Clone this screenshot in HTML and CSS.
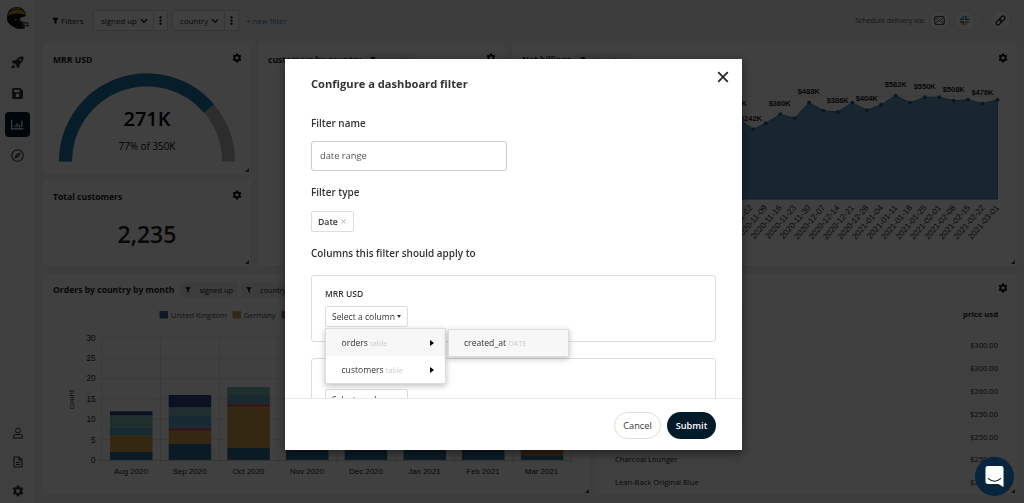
FILE: index.html
```html
<!DOCTYPE html>
<html lang="en">

<head>
    <meta charset="UTF-8">
    <meta name="viewport" content="width=device-width, initial-scale=1.0">
    <title>Dashboard</title>
    <link rel="stylesheet" href="styles.css">
</head>

<body>

    <svg class="sprite">
        <symbol id="gear" viewBox="0 0 24 24">
            <path fill-rule="evenodd" d="M9.6 1h4.8l.6 3.1 2 1.200 3-1.100 2.400 4.100-2.400 2.100v2.800l2.400 2.100-2.400 4.100-3-1.100-2 1.200-.6 3.500H9.600l-.6-3.500-2-1.200-3 1.100-2.400-4.100L4 13.200v-2.800L1.600 8.300 4 4.200l3 1.100 2-1.200zM12 7.800a4 4 0 1 0 0 8 4 4 0 0 0 0-8z"/>
        </symbol>
        <symbol id="funnel" viewBox="0 0 12 12">
            <path d="M.5.5h11L7.500 5.500v6L4.500 9.500v-4z"/>
        </symbol>
        <symbol id="chevron" viewBox="0 0 12 8">
            <path d="M1.500 1.500 6 6l4.500-4.500" fill="none" stroke="#222" stroke-width="2.200"/>
        </symbol>
        <symbol id="dots" viewBox="0 0 4 12">
            <circle cx="2" cy="1.700" r="1.500"/><circle cx="2" cy="6" r="1.500"/><circle cx="2" cy="10.300" r="1.500"/>
        </symbol>
    </svg>

    <div class="app">
        <nav class="sidebar">
            <svg class="logo" viewBox="0 0 24 24">
                <path d="M1 12C1 4 6 1 11 1s8 3 9 9l-6 2 1 4 3 2 1 4c-3 1.500-8 1.500-11-1-4-2-7-4-7-9z" fill="#111"/>
                <path d="M2 10C3 4 7 1.500 11 1.500s7.500 3 8 7.500c-6-2-11-2-17 1z" fill="#b8922e"/>
                <path d="M4 5.500c4-3 10-3 14 0" fill="none" stroke="#222" stroke-width="1"/>
                <path d="M13 14c2 2 4 3 9.500 3M18 17.500v4M21.500 17v4M16 19.500h7" fill="none" stroke="#555" stroke-width="1.200"/>
                <circle cx="9.500" cy="14" r="1.300" fill="#666"/>
            </svg>
            <a class="nav-item"><svg viewBox="0 0 24 24"><path fill-rule="evenodd" d="M23 1c-7-.5-11 2-14 7H4L1 13l5 .5 4.500 4.500.5 5 5-3v-5c5-3 7.500-7 7-14zm-6 4a2 2 0 1 1 0 4 2 2 0 0 1 0-4zM4 16c-2 1-3 4-3 7 3 0 6-1 7-3z"/></svg></a>
            <a class="nav-item"><svg viewBox="0 0 24 24"><path fill-rule="evenodd" d="M4 2h13l5 5v13a2 2 0 0 1-2 2H4a2 2 0 0 1-2-2V4a2 2 0 0 1 2-2zm1.500 3v4.500H16V5zM12 12a3.500 3.500 0 1 0 0 7 3.500 3.500 0 0 0 0-7z"/></svg></a>
            <a class="nav-item active"><svg viewBox="0 0 24 24"><path d="M1 3v17h22M7 17v-3M11.300 17V9M15.500 17v-5M20 17V5" fill="none" stroke="#fff" stroke-width="2.200"/></svg></a>
            <a class="nav-item"><svg viewBox="0 0 24 24"><circle cx="12" cy="12" r="10.500" fill="none" stroke="#333" stroke-width="2"/><path fill-rule="evenodd" d="M18 6l-3.500 8.500L6 18l3.500-8.500zm-6 4.500a1.500 1.500 0 1 0 0 3 1.500 1.500 0 0 0 0-3z"/></svg></a>
            <a class="nav-item bottom first"><svg viewBox="0 0 24 24"><circle cx="12" cy="7" r="5" fill="none" stroke="#333" stroke-width="2"/><path d="M3 22v-3c0-3 2-4 4-4h10c2 0 4 1 4 4v3z" fill="none" stroke="#333" stroke-width="2"/></svg></a>
            <a class="nav-item bottom"><svg viewBox="0 0 24 24"><path d="M4 2h10l6 6v14H4zM14 2v6h6M8 13h8M8 17h8" fill="none" stroke="#333" stroke-width="2.200"/></svg></a>
            <a class="nav-item bottom"><svg viewBox="0 0 24 24"><use href="#gear"/></svg></a>
        </nav>

        <main class="main">
            <header class="topbar">
                <svg class="funnel"><use href="#funnel"/></svg>
                <span class="filters-label">Filters</span>
                <div class="filter-btn signed">signed up <svg class="chevron"><use href="#chevron"/></svg></div>
                <div class="filter-more"><svg class="dots"><use href="#dots"/></svg></div>
                <div class="filter-btn country">country <svg class="chevron"><use href="#chevron"/></svg></div>
                <div class="filter-more"><svg class="dots"><use href="#dots"/></svg></div>
                <a class="new-filter">+ new filter</a>
                <span class="schedule">Schedule delivery via:</span>
                <div class="round"><svg viewBox="0 0 20 20"><rect x="1.500" y="3" width="17" height="14" rx="2" fill="none" stroke="#222" stroke-width="1.700"/><path d="M2 4l8 7 8-7M2 16l6-6M18 16l-6-6" fill="none" stroke="#222" stroke-width="1.400"/></svg></div>
                <div class="round"><svg viewBox="0 0 20 20" fill="none" stroke-width="3.400" stroke-linecap="round"><path d="M3 7.500h5M7.500 3v1" stroke="#36a5c0"/><path d="M12.500 3v5M17 7.500h-1" stroke="#2e967d"/><path d="M17 12.500h-5M12.500 17v-1" stroke="#c09a3e"/><path d="M7.500 17v-5M3 12.500h1" stroke="#b0506a"/></svg></div>
                <span class="divider"></span>
                <div class="round"><svg viewBox="0 0 20 20"><g fill="none" stroke="#222" stroke-width="2.400" transform="rotate(-45 10 10)"><rect x="0" y="6.500" width="11" height="7" rx="3.500"/><rect x="9" y="6.500" width="11" height="7" rx="3.500"/></g></svg></div>
            </header>

            <section class="row top">
                <div class="col">
                    <div class="card gauge">
                        <h3>MRR USD</h3><svg class="gear"><use href="#gear"/></svg>
                        <svg class="gauge-chart" viewBox="0 0 176 89">
                            <path d="M6.500 88.500a81.500 81.500 0 0 1 163 0" class="gauge-track"/>
                            <path d="M6.500 88.500a81.500 81.500 0 0 1 143.500-53" class="gauge-value"/>
                            <text x="88" y="53" class="gauge-number">271K</text>
                            <text x="88" y="76.500" class="gauge-sub">77% of 350K</text>
                        </svg>
                    </div>
                    <div class="card total">
                        <h3>Total customers</h3><svg class="gear"><use href="#gear"/></svg>
                        <p class="big">2,235</p>
                    </div>
                </div>
                <div class="card customers">
                    <h3>customers by country</h3><span class="tag"><svg><use href="#funnel"/></svg>country</span><svg class="gear"><use href="#gear"/></svg>
                </div>
                <div class="card net">
                    <h3>Net billings</h3><span class="tag"><svg><use href="#funnel"/></svg>signed up</span><svg class="gear"><use href="#gear"/></svg>
                    <svg class="area-chart" viewBox="700 70 317 190">
                        <path d="M700 96H997M700 199H997" class="grid"/>
                        <path d="M728 110L742.300 121.700 753.300 129.300 765.700 123.300 780.300 114.300 794.700 118.300 809 102.700 823.300 110.700 838 112 852.300 102.700 867 110.300 881 104.700 895.700 95.700 910 102.700 924.700 97.300 939.300 97.300 953.700 100.700 968 99.700 982.300 103.700 997.500 99.700V199H728z" class="area"/>
                        <g class="points">
                            <circle cx="753.300" cy="129.300" r="2"/><circle cx="765.700" cy="123.300" r="2"/><circle cx="780.300" cy="114.300" r="2"/><circle cx="794.700" cy="118.300" r="2"/><circle cx="809" cy="102.700" r="2"/><circle cx="823.300" cy="110.700" r="2"/><circle cx="838" cy="112" r="2"/><circle cx="852.300" cy="102.700" r="2"/><circle cx="867" cy="110.300" r="2"/><circle cx="881" cy="104.700" r="2"/><circle cx="895.700" cy="95.700" r="2"/><circle cx="910" cy="102.700" r="2"/><circle cx="924.700" cy="97.300" r="2"/><circle cx="939.300" cy="97.300" r="2"/><circle cx="953.700" cy="100.700" r="2"/><circle cx="968" cy="99.700" r="2"/><circle cx="982.300" cy="103.700" r="2"/><circle cx="997.500" cy="99.700" r="2"/>
                        </g>
                        <g class="values">
                            <text x="736" y="105.500">$350K</text><text x="751" y="120.500">$242K</text><text x="779.700" y="105.500">$360K</text><text x="808.700" y="93.500">$488K</text><text x="837.700" y="102.500">$386K</text><text x="866.700" y="101">$404K</text><text x="895.700" y="86.500">$582K</text><text x="924.700" y="89">$550K</text><text x="953.700" y="92">$508K</text><text x="982.500" y="94.500">$476K</text>
                        </g>
                        <g class="dates">
                            <text transform="translate(753 208) rotate(-49)">2020-11-02</text>
                            <text transform="translate(767.500 208) rotate(-49)">2020-11-09</text>
                            <text transform="translate(782 208) rotate(-49)">2020-11-16</text>
                            <text transform="translate(796.500 208) rotate(-49)">2020-11-23</text>
                            <text transform="translate(811 208) rotate(-49)">2020-11-30</text>
                            <text transform="translate(825.500 208) rotate(-49)">2020-12-07</text>
                            <text transform="translate(840 208) rotate(-49)">2020-12-14</text>
                            <text transform="translate(854.500 208) rotate(-49)">2020-12-21</text>
                            <text transform="translate(869 208) rotate(-49)">2020-12-28</text>
                            <text transform="translate(883.500 208) rotate(-49)">2021-01-04</text>
                            <text transform="translate(898 208) rotate(-49)">2021-01-11</text>
                            <text transform="translate(912.500 208) rotate(-49)">2021-01-18</text>
                            <text transform="translate(927 208) rotate(-49)">2021-01-25</text>
                            <text transform="translate(941.500 208) rotate(-49)">2021-02-01</text>
                            <text transform="translate(956 208) rotate(-49)">2021-02-08</text>
                            <text transform="translate(970.500 208) rotate(-49)">2021-02-15</text>
                            <text transform="translate(985 208) rotate(-49)">2021-02-22</text>
                            <text transform="translate(999.500 208) rotate(-49)">2021-03-01</text>
                        </g>
                    </svg>
                </div>
            </section>

            <section class="row lower">
                <div class="card orders">
                    <h3>Orders by country by month</h3>
                    <span class="tag"><svg><use href="#funnel"/></svg>signed up</span>
                    <span class="tag"><svg><use href="#funnel"/></svg>country</span>
                    <svg class="bar-chart" viewBox="43 300 548 190">
                        <g class="legend">
                            <rect x="159.500" y="311" width="8.500" height="7.500" fill="#2a6496"/><text x="171" y="317.500">United Kingdom</text>
                            <rect x="232.500" y="311" width="8.500" height="7.500" fill="#d0a257"/><text x="243.700" y="317.500">Germany</text>
                            <rect x="281.500" y="311" width="8.500" height="7.500" fill="#c05a5a"/>
                        </g>
                        <path d="M98 337.700H572M98 358.100H572M98 378.500H572M98 398.900H572M98 419.200H572M98 439.600H572M101.700 337.700V464M160.400 337.700V464M219.100 337.700V464M277.800 337.700V464M336.500 337.700V464M395.200 337.700V464M453.900 337.700V464M512.600 337.700V464M571.300 337.700V464" class="grid"/>
                        <g class="blue"><rect x="110" y="452" width="42.500" height="8.300"/><rect x="168.700" y="444" width="42.500" height="16.300"/><rect x="227.300" y="448" width="42.500" height="12.300"/><rect x="286" y="440" width="42.500" height="20.300"/><rect x="344.700" y="440" width="42.500" height="20.300"/><rect x="403.500" y="440" width="42.500" height="20.300"/><rect x="462" y="440" width="42.500" height="20.300"/><rect x="520.800" y="456" width="42.500" height="4.300"/></g>
                        <g class="gold"><rect x="110" y="435.500" width="42.500" height="16.500"/><rect x="168.700" y="431.500" width="42.500" height="12.500"/><rect x="227.300" y="407.300" width="42.500" height="40.700"/></g>
                        <rect x="520.800" y="440" width="42.500" height="16" class="orange"/>
                        <g class="red"><rect x="168.700" y="427.500" width="42.500" height="4"/><rect x="227.300" y="403.300" width="42.500" height="4"/></g>
                        <g class="sky"><rect x="110" y="427.500" width="42.500" height="8"/><rect x="168.700" y="415.300" width="42.500" height="12.200"/><rect x="227.300" y="395" width="42.500" height="8.300"/></g>
                        <g class="mint"><rect x="110" y="415.300" width="42.500" height="12.200"/><rect x="168.700" y="407.300" width="42.500" height="8"/><rect x="227.300" y="387" width="42.500" height="8"/></g>
                        <g class="navy"><rect x="110" y="411.300" width="42.500" height="4"/><rect x="168.700" y="395" width="42.500" height="12.300"/></g>
                        <path d="M98 460.300H572" class="axis"/>
                        <g class="y-labels"><text x="95.500" y="340.500">30</text><text x="95.500" y="361">25</text><text x="95.500" y="381.400">20</text><text x="95.500" y="401.800">15</text><text x="95.500" y="422">10</text><text x="95.500" y="442.500">5</text><text x="95.500" y="463">0</text></g>
                        <text transform="translate(73.500 399.500) rotate(-90)" class="axis-title">count</text>
                        <g class="x-labels"><text x="131" y="474">Aug 2020</text><text x="189.700" y="474">Sep 2020</text><text x="248.500" y="474">Oct 2020</text><text x="307" y="474">Nov 2020</text><text x="366" y="474">Dec 2020</text><text x="424.500" y="474">Jan 2021</text><text x="483" y="474">Feb 2021</text><text x="541.500" y="474">Mar 2021</text></g>
                    </svg>
                </div>
                <div class="card products">
                    <div class="card-head"><h3>Products</h3><svg class="gear"><use href="#gear"/></svg></div>
                    <div class="tr th"><span>name</span><span>price usd</span></div>
                    <div class="tr"><span></span><span>$300.00</span></div>
                    <div class="tr"><span></span><span>$300.00</span></div>
                    <div class="tr"><span></span><span>$260.00</span></div>
                    <div class="tr"><span></span><span>$250.00</span></div>
                    <div class="tr"><span></span><span>$250.00</span></div>
                    <div class="tr"><span>Charcoal Lounger</span><span>$250.00</span></div>
                    <div class="tr"><span>Lean-Back Original Blue</span><span>$250.00</span></div>
                </div>
            </section>
        </main>
    </div>

    <div class="overlay">
        <div class="modal">
            <svg class="close" viewBox="0 0 12 12"><path d="M1.200 1.200l9.600 9.600M10.800 1.200l-9.600 9.600"/></svg>
            <div class="modal-body">
                <h2>Configure a dashboard filter</h2>
                <label for="filter-name">Filter name</label>
                <input type="text" id="filter-name" class="name-input" value="date range">
                <label>Filter type</label>
                <div class="type-tag">Date <svg viewBox="0 0 6 6"><path d="M.7.7l4.600 4.600M5.300.7L.7 5.300"/></svg></div>
                <label>Columns this filter should apply to</label>
                <div class="column-box">
                    <h4>MRR USD</h4>
                    <div class="select">Select a column<i class="caret"></i></div>
                </div>
                <div class="column-box">
                    <h4></h4>
                    <div class="select">Select a column<i class="caret"></i></div>
                </div>
            </div>
            <div class="modal-footer">
                <button class="cancel-button">Cancel</button>
                <button class="submit-button">Submit</button>
            </div>
            <div class="menu">
                <div class="menu-item hovered">orders <small>table</small><i class="arrow"></i></div>
                <div class="menu-item">customers <small>table</small><i class="arrow"></i></div>
            </div>
            <div class="submenu">created_at <small>DATE</small></div>
        </div>
    </div>

    <div class="chat">
        <svg viewBox="0 0 20 22"><path d="M3 0h14a2.500 2.500 0 0 1 2.500 2.500V22L14 19H3A2.500 2.500 0 0 1 .5 16.500v-14A2.500 2.500 0 0 1 3 0z" fill="#fff"/><path d="M3.500 13.300c4 3.300 9 3.300 13 0" fill="none" stroke="#07253d" stroke-width="1.200" stroke-linecap="round"/></svg>
    </div>

</body>

</html>
```

FILE: styles.css
```css
* {
    box-sizing: border-box;
}

body {
    margin: 0;
    height: 503px;
    overflow: hidden;
    background: #f4f4f4;
    font-family: "Open Sans", sans-serif;
    font-size: 8px;
    color: #222;
}

h2, h3, h4, p {
    margin: 0;
}

.sprite {
    display: none;
}

.app {
    display: flex;
    height: 503px;
}

/* sidebar */
.sidebar {
    width: 36px;
    flex: none;
    display: flex;
    flex-direction: column;
    align-items: center;
    background: #fafafa;
    border-right: 1px solid #e6e6e6;
    padding-top: 6px;
}

.logo {
    width: 24px;
    height: 24px;
    margin-bottom: 20px;
}

.nav-item {
    width: 25px;
    height: 25px;
    margin-bottom: 6px;
    border-radius: 4px;
    display: flex;
    align-items: center;
    justify-content: center;
    fill: #333;
}

.nav-item svg {
    width: 13px;
    height: 13px;
}

.nav-item.active {
    background: #021f33;
}

.nav-item.bottom {
    margin-bottom: 4px;
}

.nav-item.bottom svg {
    width: 12px;
    height: 12px;
}

.nav-item.first {
    margin-top: auto;
}

.nav-item:last-child {
    margin-bottom: 0 !important;
}

.main {
    flex: 1;
    padding-left: 7px;
}

/* top bar */
.topbar {
    height: 43px;
    display: flex;
    align-items: center;
    padding: 0 13px 2px 9px;
}

.funnel {
    width: 7px;
    height: 8px;
    margin-right: 2px;
}

.filters-label {
    width: 32px;
}

.filter-btn,
.filter-more {
    height: 21px;
    display: flex;
    align-items: center;
    border: 1px solid #d5d5d5;
    background: #fff;
}

.filter-btn {
    padding-left: 7px;
    border-radius: 2px 0 0 2px;
    font-size: 7.9px;
}

.signed {
    width: 61px;
}

.country {
    width: 53px;
    margin-left: 4px;
}

.filter-more {
    width: 14px;
    justify-content: center;
    border-left: 0;
}

.chevron {
    width: 8px;
    height: 6px;
    margin-left: 3px;
}

.dots {
    width: 3px;
    height: 9px;
}

.new-filter {
    margin-left: 7px;
    color: #4a7fc1;
    font-size: 7.8px;
}

.schedule {
    margin-left: auto;
    margin-right: 4px;
    color: #555;
    font-size: 7px;
}

.round {
    width: 21px;
    height: 21px;
    margin-right: 4px;
    border: 1px solid #e0e0e0;
    border-radius: 50%;
    background: #fff;
    display: flex;
    align-items: center;
    justify-content: center;
}

.round svg {
    width: 11px;
    height: 11px;
}

.round:last-child {
    margin-right: 0;
}

.divider {
    width: 1px;
    height: 14px;
    background: #ddd;
    margin: 0 7px 0 3px;
}

/* cards */
.row {
    display: flex;
    gap: 7px;
}

.top {
    height: 223px;
    margin-bottom: 7px;
}

.lower {
    height: 222px;
    gap: 5px;
}

.col {
    width: 208px;
    display: flex;
    flex-direction: column;
    gap: 6px;
}

.card {
    position: relative;
    background: #fff;
    box-shadow: 0 0 3px rgba(0, 0, 0, 0.08);
}

.card::after {
    content: "";
    position: absolute;
    right: 2px;
    bottom: 2px;
    border: 2px solid #444;
    border-top-color: transparent;
    border-left-color: transparent;
}

.card h3 {
    display: inline-block;
    margin: 11px 4px 0 10px;
    font-size: 8.6px;
    line-height: 13px;
    font-weight: 700;
}

.gear {
    float: right;
    width: 10px;
    height: 10px;
    margin: 10px 9px 0 0;
}

.gauge {
    height: 131px;
}

.gauge-chart {
    display: block;
    width: 176px;
    height: 89px;
    margin: 6px auto 0 16px;
}

.gauge-track,
.gauge-value {
    fill: none;
    stroke: #b4b4b4;
    stroke-width: 13;
}

.gauge-value {
    stroke: #2276a8;
}

.gauge-number {
    font-size: 20px;
    font-weight: 600;
    text-anchor: middle;
}

.gauge-sub {
    font-size: 9.9px;
    text-anchor: middle;
}

.total {
    flex: 1;
}

.big {
    font-size: 23px;
    font-weight: 600;
    line-height: 32px;
    text-align: center;
    margin-top: 14px;
}

.customers {
    width: 247px;
}

.net {
    width: 505px;
}

.area-chart {
    display: block;
    width: 317px;
    height: 190px;
    margin: 2px 0 0 188px;
}

.grid,
.axis {
    stroke: #e6e6e6;
    stroke-width: 1;
}

.axis {
    stroke: #ccc;
}

.area {
    fill: #5f98bd;
    stroke: #3580ad;
}

.points {
    fill: #27648c;
}

.values,
.dates,
.x-labels,
.y-labels,
.axis-title {
    font-family: "Liberation Sans", sans-serif;
    fill: #222;
}

.values {
    font-size: 7.5px;
    font-weight: 700;
    text-anchor: middle;
}

.dates {
    font-size: 8.3px;
    text-anchor: end;
}

.tag {
    display: inline-flex;
    align-items: center;
    height: 15px;
    padding: 0 5px;
    margin-right: 1px;
    border-radius: 3px;
    background: #f0f0f0;
    font-size: 7.4px;
}

.tag svg {
    width: 6px;
    height: 6px;
    margin-right: 8px;
}

.orders {
    width: 548px;
}

.bar-chart {
    display: block;
    width: 548px;
    height: 190px;
    margin-top: 2px;
}

.legend {
    font-size: 7.4px;
    fill: #444;
}

.blue { fill: #2e6d8e; }
.gold { fill: #d0a04e; }
.orange { fill: #c47a4a; }
.red { fill: #c86464; }
.sky { fill: #5ea3c4; }
.mint { fill: #7cbcb8; }
.navy { fill: #33408c; }

.y-labels {
    font-size: 8.2px;
    text-anchor: end;
}

.x-labels,
.axis-title {
    font-size: 7.9px;
    text-anchor: middle;
}

.products {
    width: 421px;
}

.card-head {
    height: 30px;
}

.tr {
    display: flex;
    justify-content: space-between;
    align-items: center;
    height: 22.8px;
    margin: 0 8px;
    padding: 0 11px;
    font-size: 7.6px;
}

.tr:nth-child(even) {
    background: #fafafa;
}

.th {
    height: 22px;
    margin-bottom: 9px;
    font-size: 7.7px;
    font-weight: 700;
}

/* modal */
.overlay {
    position: fixed;
    inset: 0;
    background: rgba(0, 0, 0, 0.75);
    display: flex;
    justify-content: center;
    align-items: flex-start;
    padding-top: 59px;
    padding-left: 3px;
}

.modal {
    position: relative;
    width: 457px;
    height: 391px;
    background: #fff;
    display: flex;
    flex-direction: column;
    box-shadow: 0 3px 10px rgba(0, 0, 0, 0.5);
    color: #333;
}

.close {
    position: absolute;
    top: 12px;
    right: 13px;
    width: 12px;
    height: 12px;
    stroke: #222;
    stroke-width: 1.7;
}

.modal-body {
    height: 339px;
    overflow: hidden;
    padding: 17px 26px 0;
}

.modal h2 {
    font-size: 11.15px;
    line-height: 16px;
    font-weight: 700;
    margin-bottom: 23px;
}

label {
    display: block;
    font-size: 9.95px;
    line-height: 16px;
    font-weight: 600;
}

.name-input {
    display: block;
    width: 196px;
    height: 30px;
    margin: 10px 0 13px;
    padding: 0 8px 1px;
    border: 1px solid #ccc;
    border-radius: 3px;
    font-family: inherit;
    font-size: 9.3px;
    color: #555;
}

.type-tag {
    display: flex;
    align-items: center;
    justify-content: space-between;
    width: 43px;
    height: 21px;
    margin: 11px 0 13px;
    padding: 0 7px 0 6px;
    border: 1px solid #ddd;
    border-radius: 2px;
    font-size: 8.7px;
    font-weight: 600;
}

.type-tag svg {
    width: 5px;
    height: 5px;
    stroke: #999;
    stroke-width: 0.9;
}

.column-box {
    height: 67px;
    margin-top: 14px;
    margin-bottom: 16px;
    padding: 12px 13px;
    border: 1px solid #ddd;
    border-radius: 3px;
}

.column-box + .column-box {
    margin-top: 0;
}

.column-box h4 {
    height: 12px;
    margin-bottom: 6px;
    font-size: 8.5px;
    line-height: 12px;
    font-weight: 600;
}

.select {
    display: flex;
    align-items: center;
    width: 83px;
    height: 21px;
    padding-left: 6px;
    border: 1px solid #ddd;
    border-radius: 2px;
    font-size: 8.6px;
    white-space: nowrap;
}

.caret {
    margin-left: 2px;
    border: 2.5px solid transparent;
    border-top: 3px solid #333;
    border-bottom: 0;
}

.menu,
.submenu {
    position: absolute;
    background: #fff;
    border: 1px solid #ddd;
    box-shadow: 0 2px 6px rgba(0, 0, 0, 0.25);
    font-size: 8.6px;
}

.menu {
    left: 40px;
    top: 269px;
    width: 121px;
    height: 56px;
}

.menu-item {
    display: flex;
    align-items: center;
    height: 27px;
    padding: 0 11px 0 15.5px;
    white-space: pre;
}

.hovered,
.submenu {
    background: #f7f7f7;
}

small {
    color: #ccc;
    font-size: 7.3px;
}

.arrow {
    margin-left: auto;
    border: 3.5px solid transparent;
    border-left: 4px solid #000;
    border-right: 0;
}

.submenu {
    left: 163px;
    top: 270px;
    width: 121px;
    height: 28px;
    line-height: 27px;
    padding-left: 15px;
}

.modal-footer {
    flex: 1;
    border-top: 1px solid #e8e8e8;
    display: flex;
    justify-content: flex-end;
    gap: 6px;
    padding: 13px 26px 0;
}

.modal-footer button {
    height: 27px;
    padding: 0;
    border-radius: 14px;
    font-family: inherit;
    font-size: 9.2px;
}

.cancel-button {
    width: 47px;
    border: 1px solid #ddd;
    background: #fff;
    color: #333;
}

.modal-footer .submit-button {
    width: 49px;
    border: none;
    background: #021b2b;
    color: #fff;
    font-weight: 600;
}

/* chat launcher */
.chat {
    position: fixed;
    left: 975px;
    top: 457px;
    width: 39px;
    height: 39px;
    border-radius: 50%;
    background: #07253d;
    display: flex;
    align-items: center;
    justify-content: center;
}

.chat svg {
    width: 19px;
    height: 21px;
}
```
